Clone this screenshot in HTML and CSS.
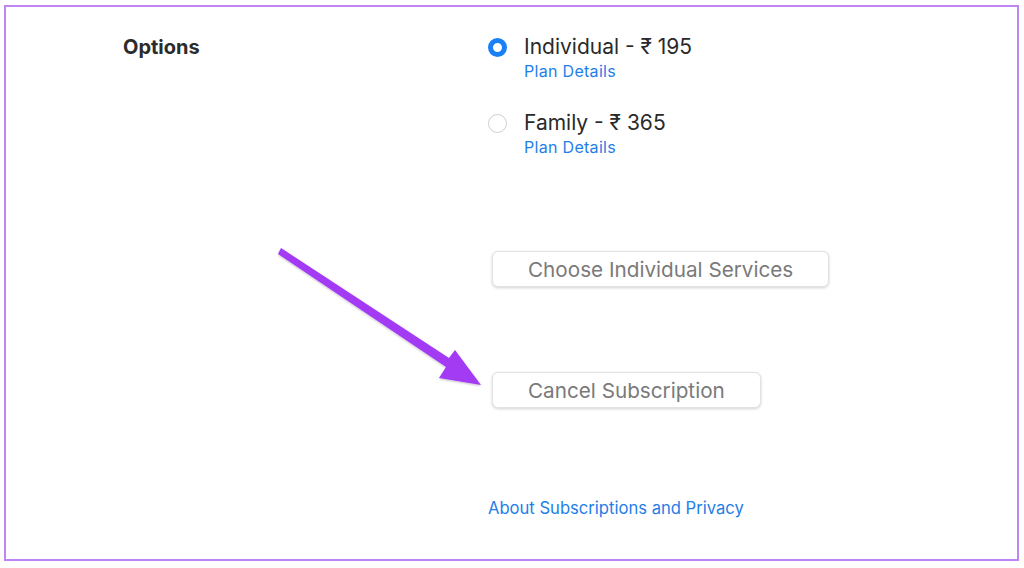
FILE: index.html
```html
<!DOCTYPE html>
<html>
<head>
<meta charset="utf-8">
<link rel="stylesheet" href="styles.css">
</head>
<body>
<div class="frame">
  <div class="layout">
    <div class="label">Options</div>
    <div class="options">
      <div class="option">
        <span class="radio on"></span>
        <div class="opt-text">
          <div class="opt-title">Individual - ₹ 195</div>
          <a class="link small">Plan Details</a>
        </div>
      </div>
      <div class="option second">
        <span class="radio"></span>
        <div class="opt-text">
          <div class="opt-title">Family - ₹ 365</div>
          <a class="link small">Plan Details</a>
        </div>
      </div>
      <button class="btn btn-choose">Choose Individual Services</button>
      <button class="btn btn-cancel">Cancel Subscription</button>
      <a class="link about">About Subscriptions and Privacy</a>
    </div>
  </div>
  <svg class="arrow" width="240" height="160" viewBox="0 0 240 160">
    <defs>
      <filter id="sh" x="-20%" y="-20%" width="140%" height="140%">
        <feDropShadow dx="0" dy="1" stdDeviation="1.2" flood-color="#000" flood-opacity="0.25"/>
      </filter>
    </defs>
    <polygon filter="url(#sh)" fill="#a33bf5" points="1,5 3,1 171,111 177,103 203,138 161,131 168,120 0,7"/>
  </svg>
</div>
</body>
</html>
```

FILE: styles.css
```css
html, body {
  margin: 0;
  padding: 0;
  background: #fff;
}
body {
  font-family: Inter, "Noto Sans", "Liberation Sans", sans-serif;
  width: 1024px;
  height: 568px;
  overflow: hidden;
}
.frame {
  position: relative;
  box-sizing: border-box;
  margin: 5px 0 0 4px;
  width: 1015px;
  height: 556px;
  border: 2px solid #c184f4;
}
.layout {
  display: grid;
  grid-template-columns: 365px 1fr;
  padding: 27px 0 0 117px;
}
.label {
  font-size: 20px;
  font-weight: 700;
  color: #2b2b2b;
  line-height: 26px;
}
.options {
  display: flex;
  flex-direction: column;
  align-items: flex-start;
}
.option {
  display: flex;
  align-items: flex-start;
}
.option.second {
  margin-top: 29px;
}
.radio {
  box-sizing: border-box;
  width: 19px;
  height: 19px;
  border-radius: 50%;
  border: 1px solid #cfcfcf;
  background: #fff;
  margin-top: 4px;
  margin-right: 17px;
}
.radio.on {
  border: 5.5px solid #1a80f5;
}
.opt-title {
  font-size: 21px;
  color: #2a2a2a;
  line-height: 26px;
}
.link {
  color: #1f7ee8;
  text-decoration: none;
}
.small {
  display: block;
  font-size: 16px;
  letter-spacing: 0.3px;
  line-height: 20px;
  margin-top: 1px;
}
.btn {
  font-family: inherit;
  font-size: 20.7px;
  color: #7a7a7a;
  background: #fff;
  border: 1px solid #e2e2e2;
  border-radius: 6px;
  box-shadow: 0 1px 3px rgba(0,0,0,0.18);
  height: 36px;
  padding: 0 0 0 35px;
  text-align: left;
  margin-left: 4px;
}
.btn-choose {
  width: 337px;
  margin-top: 94px;
}
.btn-cancel {
  width: 269px;
  margin-top: 85px;
}
.about {
  font-size: 16.6px;
  line-height: 20px;
  margin-top: 90px;
}
.arrow {
  position: absolute;
  left: 272px;
  top: 240px;
}
```
